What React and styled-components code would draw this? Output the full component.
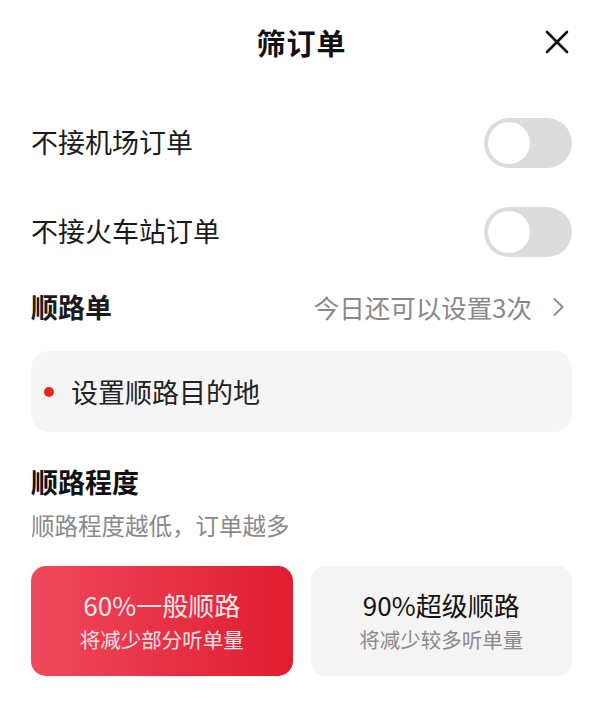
import React, { useState } from "react";
import styled, { createGlobalStyle } from "styled-components";

const GlobalStyle = createGlobalStyle`
  html, body {
    margin: 0;
    padding: 0;
    background: #ffffff;
  }
  body {
    font-family: "Noto Sans CJK SC", "Noto Sans", sans-serif;
    color: #111;
  }
`;

const Sheet = styled.div`
  width: 601px;
  height: 706px;
  box-sizing: border-box;
  padding: 0 29px 0 31px;
  display: flex;
  flex-direction: column;
  background: #fff;
  overflow: hidden;
`;

const Header = styled.div`
  height: 84px;
  display: grid;
  grid-template-columns: 1fr auto 1fr;
  align-items: center;
`;

const Title = styled.h1`
  grid-column: 2;
  margin: 0;
  font-size: 29px;
  font-weight: 700;
  letter-spacing: 1px;
  color: #111;
  line-height: 1;
`;

const CloseButton = styled.button`
  grid-column: 3;
  justify-self: end;
  width: 26px;
  height: 26px;
  margin-right: 2px;
  padding: 0;
  border: none;
  background: none;
  display: flex;
  align-items: center;
  justify-content: center;
`;

const SwitchList = styled.div`
  padding-top: 14px;
`;

const Row = styled.div`
  height: ${(p) => p.h || 89}px;
  display: flex;
  align-items: center;
  justify-content: space-between;
`;

const Label = styled.span`
  font-size: 27px;
  font-weight: ${(p) => (p.bold ? 700 : 400)};
  color: #1a1a1a;
  line-height: 1;
  margin-top: -2px;
`;

const Track = styled.button`
  width: 88px;
  height: 50px;
  padding: 4px;
  border: none;
  border-radius: 25px;
  background: ${(p) => (p.on ? "#e8283a" : "#dcdcdc")};
  display: flex;
  justify-content: ${(p) => (p.on ? "flex-end" : "flex-start")};
  align-items: center;
  box-sizing: border-box;
`;

const Knob = styled.span`
  width: 42px;
  height: 42px;
  border-radius: 50%;
  background: #fff;
`;

const Hint = styled.span`
  display: flex;
  align-items: center;
  gap: 21px;
  font-size: 25.5px;
  color: #888;
  line-height: 1;
  margin-right: 8px;
`;

const DestBox = styled.div`
  margin-top: 13px;
  height: 81px;
  border-radius: 18px;
  background: #f5f5f5;
  display: flex;
  align-items: center;
  padding-left: 13px;
  gap: 17px;
`;

const Dot = styled.span`
  width: 10px;
  height: 10px;
  border-radius: 50%;
  background: #e8261f;
`;

const DestText = styled.span`
  font-size: 27px;
  color: #222;
  line-height: 1;
`;

const SectionTitle = styled.h2`
  margin: 31px 0 0;
  height: 36px;
  display: flex;
  align-items: center;
  font-size: 27px;
  font-weight: 700;
  color: #111;
`;

const SectionNote = styled.p`
  margin: 10px 0 0;
  height: 32px;
  display: flex;
  align-items: center;
  font-size: 23.5px;
  color: #8a8a8a;
`;

const Options = styled.div`
  margin-top: 25px;
  display: grid;
  grid-template-columns: 1fr 1fr;
  gap: 18px;
`;

const Option = styled.div`
  height: 110px;
  border-radius: 15px;
  display: flex;
  flex-direction: column;
  align-items: center;
  padding-top: 24px;
  box-sizing: border-box;
  background: ${(p) =>
    p.active ? "linear-gradient(90deg, #f0485c 0%, #e01c30 100%)" : "#f4f4f4"};
`;

const OptionTitle = styled.div`
  font-size: 26px;
  line-height: 30px;
  color: ${(p) => (p.active ? "#fde8ea" : "#111")};
`;

const OptionSub = styled.div`
  margin-top: 6px;
  font-size: 20.5px;
  line-height: 26px;
  color: ${(p) => (p.active ? "#fbe2e5" : "#8a8a8a")};
`;

const CloseIcon = () => (
  <svg width="24" height="24" viewBox="0 0 24 24">
    <path d="M2 2 L22 22 M22 2 L2 22" stroke="#111" strokeWidth="2.6" strokeLinecap="round" />
  </svg>
);

const Chevron = () => (
  <svg width="11" height="20" viewBox="0 0 11 20">
    <path d="M1.5 2 L9.5 10 L1.5 18" fill="none" stroke="#8c8c8c" strokeWidth="1.8" strokeLinecap="round" strokeLinejoin="round" />
  </svg>
);

const Switch = ({ on, onToggle }) => (
  <Track on={on ? 1 : 0} onClick={onToggle}>
    <Knob />
  </Track>
);

const levels = [
  { id: 60, title: "60%一般顺路", sub: "将减少部分听单量" },
  { id: 90, title: "90%超级顺路", sub: "将减少较多听单量" },
];

export default function App() {
  const [airport, setAirport] = useState(false);
  const [station, setStation] = useState(false);
  const [level, setLevel] = useState(60);

  return (
    <>
      <GlobalStyle />
      <Sheet>
        <Header>
          <Title>筛订单</Title>
          <CloseButton aria-label="关闭">
            <CloseIcon />
          </CloseButton>
        </Header>

        <SwitchList>
          <Row>
            <Label>不接机场订单</Label>
            <Switch on={airport} onToggle={() => setAirport(!airport)} />
          </Row>
          <Row>
            <Label>不接火车站订单</Label>
            <Switch on={station} onToggle={() => setStation(!station)} />
          </Row>
        </SwitchList>

        <Row h={62}>
          <Label bold>顺路单</Label>
          <Hint>
            今日还可以设置3次
            <Chevron />
          </Hint>
        </Row>

        <DestBox>
          <Dot />
          <DestText>设置顺路目的地</DestText>
        </DestBox>

        <SectionTitle>顺路程度</SectionTitle>
        <SectionNote>顺路程度越低，订单越多</SectionNote>

        <Options>
          {levels.map((l) => {
            const active = level === l.id;
            return (
              <Option key={l.id} active={active ? 1 : 0} onClick={() => setLevel(l.id)}>
                <OptionTitle active={active ? 1 : 0}>{l.title}</OptionTitle>
                <OptionSub active={active ? 1 : 0}>{l.sub}</OptionSub>
              </Option>
            );
          })}
        </Options>
      </Sheet>
    </>
  );
}
